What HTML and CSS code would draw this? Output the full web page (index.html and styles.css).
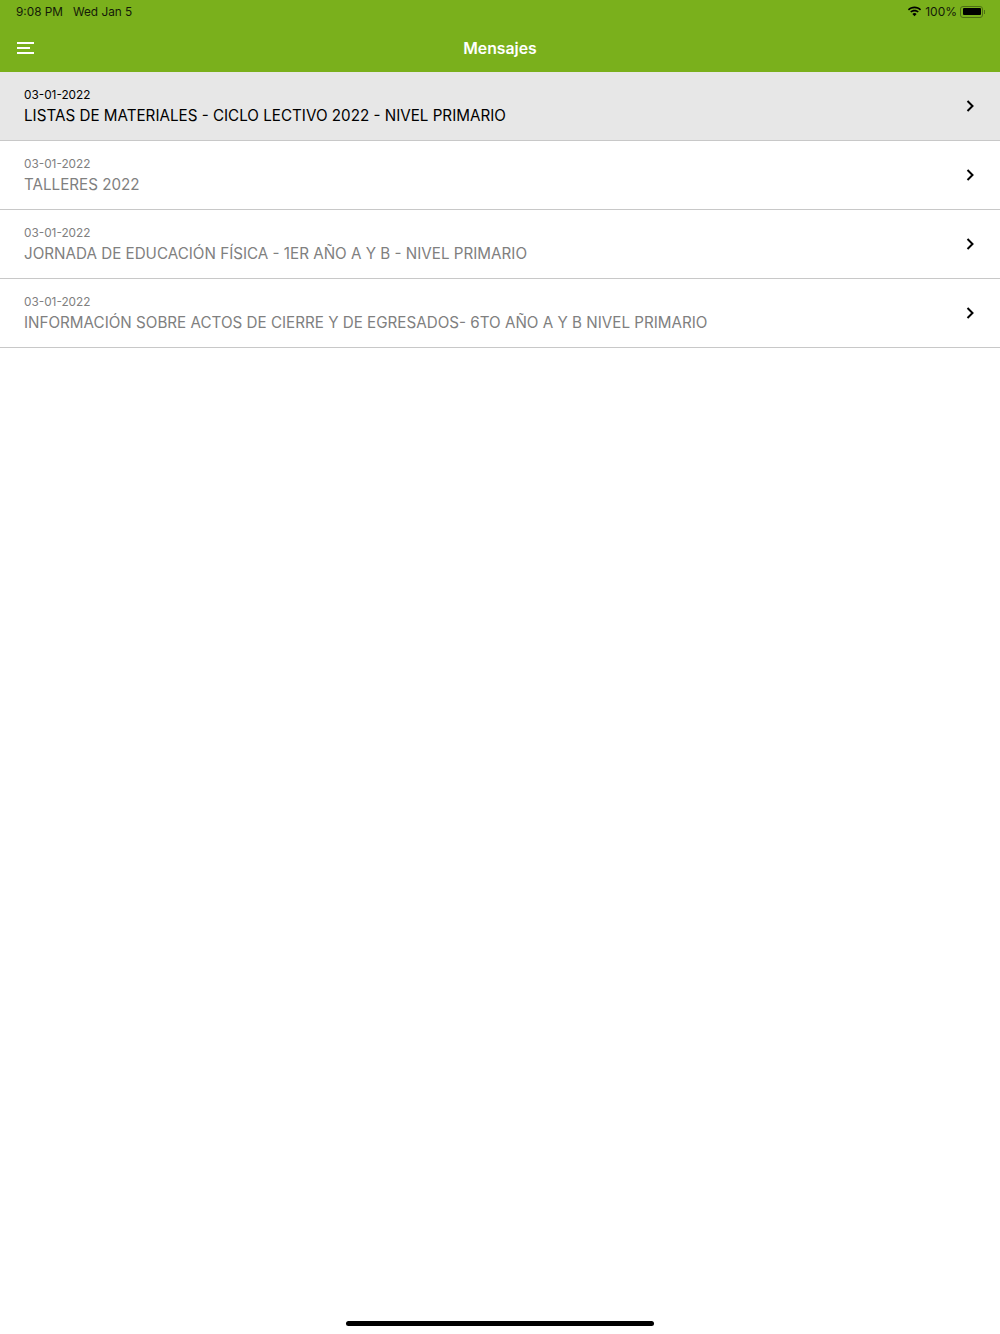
FILE: index.html
```html
<!DOCTYPE html>
<html lang="es">

<head>
    <meta charset="UTF-8">
    <meta name="viewport" content="width=device-width, initial-scale=1.0">
    <title>Mensajes</title>
    <link rel="stylesheet" href="styles.css">
</head>

<body>
    <header class="header">
        <div class="status-bar">
            <div class="status-left">
                <span>9:08 PM</span>
                <span>Wed Jan 5</span>
            </div>
            <div class="status-right">
                <svg class="wifi" width="15" height="11" viewBox="0 0 15 11">
                    <path d="M7.500 2.200c2.100 0 4 .8 5.500 2.200l1.100-1.200C12.300 1.400 10 .4 7.500 .4S2.700 1.400 .9 3.200L2 4.400c1.500-1.400 3.400-2.200 5.500-2.200z" />
                    <path d="M7.500 5.400c1.200 0 2.300 .5 3.200 1.200l1.100-1.200c-1.200-1-2.700-1.700-4.300-1.700s-3.100 .7-4.300 1.700l1.100 1.200c.9-.7 2-1.200 3.200-1.200z" />
                    <path d="M7.500 7.100c-.8 0-1.500 .3-2.100 .8l2.100 2.400 2.100-2.400c-.6-.5-1.300-.8-2.100-.8z" />
                </svg>
                <span>100%</span>
                <div class="battery">
                    <div class="battery-fill"></div>
                </div>
                <div class="battery-cap"></div>
            </div>
        </div>
        <div class="nav-bar">
            <button class="menu-btn">
                <svg width="18" height="12" viewBox="0 0 18 12">
                    <rect x="0" y="0" width="17" height="2" fill="#fff" />
                    <rect x="0" y="5" width="13" height="2" fill="#fff" />
                    <rect x="0" y="10" width="17" height="2" fill="#fff" />
                </svg>
            </button>
            <h1 class="nav-title">Mensajes</h1>
        </div>
    </header>

    <ul class="message-list">
        <li class="message message-active">
            <div class="message-text">
                <div class="message-date">03-01-2022</div>
                <div class="message-title">LISTAS DE MATERIALES - CICLO LECTIVO 2022 - NIVEL PRIMARIO</div>
            </div>
            <svg class="chevron" width="8" height="12" viewBox="0 0 8 12">
                <path d="M1.500 1l5 5-5 5" />
            </svg>
        </li>
        <li class="message">
            <div class="message-text">
                <div class="message-date">03-01-2022</div>
                <div class="message-title">TALLERES 2022</div>
            </div>
            <svg class="chevron" width="8" height="12" viewBox="0 0 8 12">
                <path d="M1.500 1l5 5-5 5" />
            </svg>
        </li>
        <li class="message">
            <div class="message-text">
                <div class="message-date">03-01-2022</div>
                <div class="message-title">JORNADA DE EDUCACIÓN FÍSICA - 1ER AÑO A Y B - NIVEL PRIMARIO</div>
            </div>
            <svg class="chevron" width="8" height="12" viewBox="0 0 8 12">
                <path d="M1.500 1l5 5-5 5" />
            </svg>
        </li>
        <li class="message">
            <div class="message-text">
                <div class="message-date">03-01-2022</div>
                <div class="message-title">INFORMACIÓN SOBRE ACTOS DE CIERRE Y DE EGRESADOS- 6TO AÑO A Y B NIVEL PRIMARIO</div>
            </div>
            <svg class="chevron" width="8" height="12" viewBox="0 0 8 12">
                <path d="M1.500 1l5 5-5 5" />
            </svg>
        </li>
    </ul>

    <div class="home-bar"></div>
</body>

</html>
```

FILE: styles.css
```css
* {
    box-sizing: border-box;
}

body {
    font-family: Inter, "Liberation Sans", sans-serif;
    background-color: #fff;
    margin: 0;
    padding: 0;
    height: 1334px;
    position: relative;
    overflow: hidden;
}

.header {
    background-color: #7ab01c;
    height: 72px;
}

.status-bar {
    display: flex;
    justify-content: space-between;
    align-items: center;
    height: 23px;
    padding: 0 15px 0 16px;
    font-size: 11.800px;
    color: #141a08;
}

.status-left {
    display: flex;
    gap: 10px;
}

.status-right {
    display: flex;
    align-items: center;
    font-size: 12px;
}

.wifi {
    fill: #000;
    margin-right: 3px;
}

.battery {
    width: 23px;
    height: 12px;
    margin-left: 3px;
    padding: 1.500px;
    border: 1px solid #4d6f14;
    border-radius: 3px;
}

.battery-fill {
    height: 100%;
    background-color: #000;
    border-radius: 1px;
}

.battery-cap {
    width: 1px;
    height: 4px;
    margin-left: 1px;
    background-color: #4d6f14;
}

.nav-bar {
    position: relative;
    display: flex;
    align-items: center;
    justify-content: center;
    height: 49px;
    padding-top: 1px;
}

.menu-btn {
    position: absolute;
    left: 17px;
    top: 19px;
    display: flex;
    padding: 0;
    border: none;
    background: none;
}

.nav-title {
    margin: 0;
    font-size: 15.800px;
    font-weight: 600;
    color: #fff;
}

.message-list {
    margin: 0;
    padding: 0;
    list-style: none;
}

.message {
    display: flex;
    align-items: center;
    justify-content: space-between;
    height: 69px;
    padding: 0 26px 0 24px;
    border-bottom: 1px solid #c8c8c8;
    color: #808080;
}

.message-active {
    background-color: #e7e7e7;
    color: #000;
}

.message-text {
    padding-top: 1px;
}

.message-date {
    font-size: 11.800px;
    line-height: 16px;
}

.message-title {
    margin-top: 3px;
    font-size: 15.200px;
    line-height: 20px;
}

.chevron {
    fill: none;
    stroke: #000;
    stroke-width: 2;
}

.home-bar {
    position: absolute;
    left: 346px;
    top: 1321px;
    width: 308px;
    height: 5px;
    border-radius: 3px;
    background-color: #000;
}
```
